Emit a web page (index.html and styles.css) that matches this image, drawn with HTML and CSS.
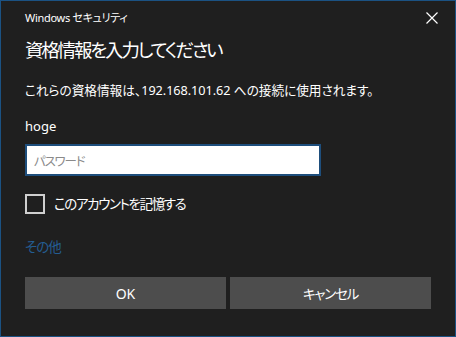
FILE: index.html
```html
<!DOCTYPE html>
<html lang="ja">
<head>
<meta charset="utf-8">
<link rel="stylesheet" href="styles.css">
</head>
<body>
<div class="dialog">
  <div class="titlebar">
    <span class="title">Windows セキュリティ</span>
    <svg class="close" width="12" height="12" viewBox="0 0 12 12"><path d="M0.5 0.5 L11.5 11.5 M11.5 0.5 L0.5 11.5" stroke="#ffffff" stroke-width="1.2" fill="none"/></svg>
  </div>
  <h1 class="heading">資格情報を入力してください</h1>
  <p class="desc">これらの資格情報は、192.168.101.62 への接続に使用されます。</p>
  <div class="user">hoge</div>
  <div class="input"><span class="placeholder">パスワード</span></div>
  <label class="remember"><span class="box"></span><span class="label">このアカウントを記憶する</span></label>
  <div class="more">その他</div>
  <div class="buttons">
    <div class="btn">OK</div>
    <div class="btn btn-jp">キャンセル</div>
  </div>
</div>
</body>
</html>
```
FILE: styles.css
```css
html, body {
  margin: 0;
  padding: 0;
  background: #1f1f1f;
}
.dialog {
  box-sizing: border-box;
  width: 456px;
  height: 337px;
  border: 1px solid #1b5283;
  background: #1f1f1f;
  color: #ffffff;
  font-family: "Noto Sans", "Noto Sans CJK JP", sans-serif;
  font-feature-settings: "palt";
  padding: 0 24px;
  display: flex;
  flex-direction: column;
}
.titlebar {
  display: flex;
  justify-content: space-between;
  align-items: center;
  height: 18px;
  margin-top: 8px;
}
.title {
  font-size: 11px;
  line-height: 18px;
  letter-spacing: -0.3px;
}
.close {
  margin-right: -7px;
}
.heading {
  margin: 10px 0 0;
  font-size: 18.5px;
  font-weight: normal;
  line-height: 26px;
  letter-spacing: -2.2px;
}
.desc {
  margin: 18px 0 0;
  font-size: 12.7px;
  line-height: 18px;
  letter-spacing: -0.05px;
}
.user {
  margin-top: 18px;
  font-size: 13px;
  line-height: 18px;
}
.input {
  box-sizing: border-box;
  margin-top: 9px;
  width: 296px;
  height: 32px;
  background: #ffffff;
  border: 2px solid #1e4e7c;
  padding: 0 7px;
  display: flex;
  align-items: center;
}
.placeholder {
  color: #8a8a8a;
  font-size: 12.5px;
  letter-spacing: -1.2px;
}
.remember {
  margin-top: 18px;
  display: flex;
  align-items: center;
  gap: 9px;
  height: 20px;
}
.box {
  box-sizing: border-box;
  width: 20px;
  height: 20px;
  border: 2px solid #cfcfcf;
}
.label {
  font-size: 13.5px;
  line-height: 20px;
  letter-spacing: -1.4px;
}
.more {
  margin-top: 24px;
  font-size: 13.5px;
  line-height: 18px;
  letter-spacing: -1px;
  color: #245d92;
}
.buttons {
  margin-top: 21px;
  display: flex;
  gap: 4px;
}
.btn {
  flex: 1;
  height: 32px;
  background: #4d4d4d;
  display: flex;
  align-items: center;
  justify-content: center;
  font-size: 14px;
}
.btn-jp {
  font-size: 13.5px;
  letter-spacing: -1.2px;
}
```
